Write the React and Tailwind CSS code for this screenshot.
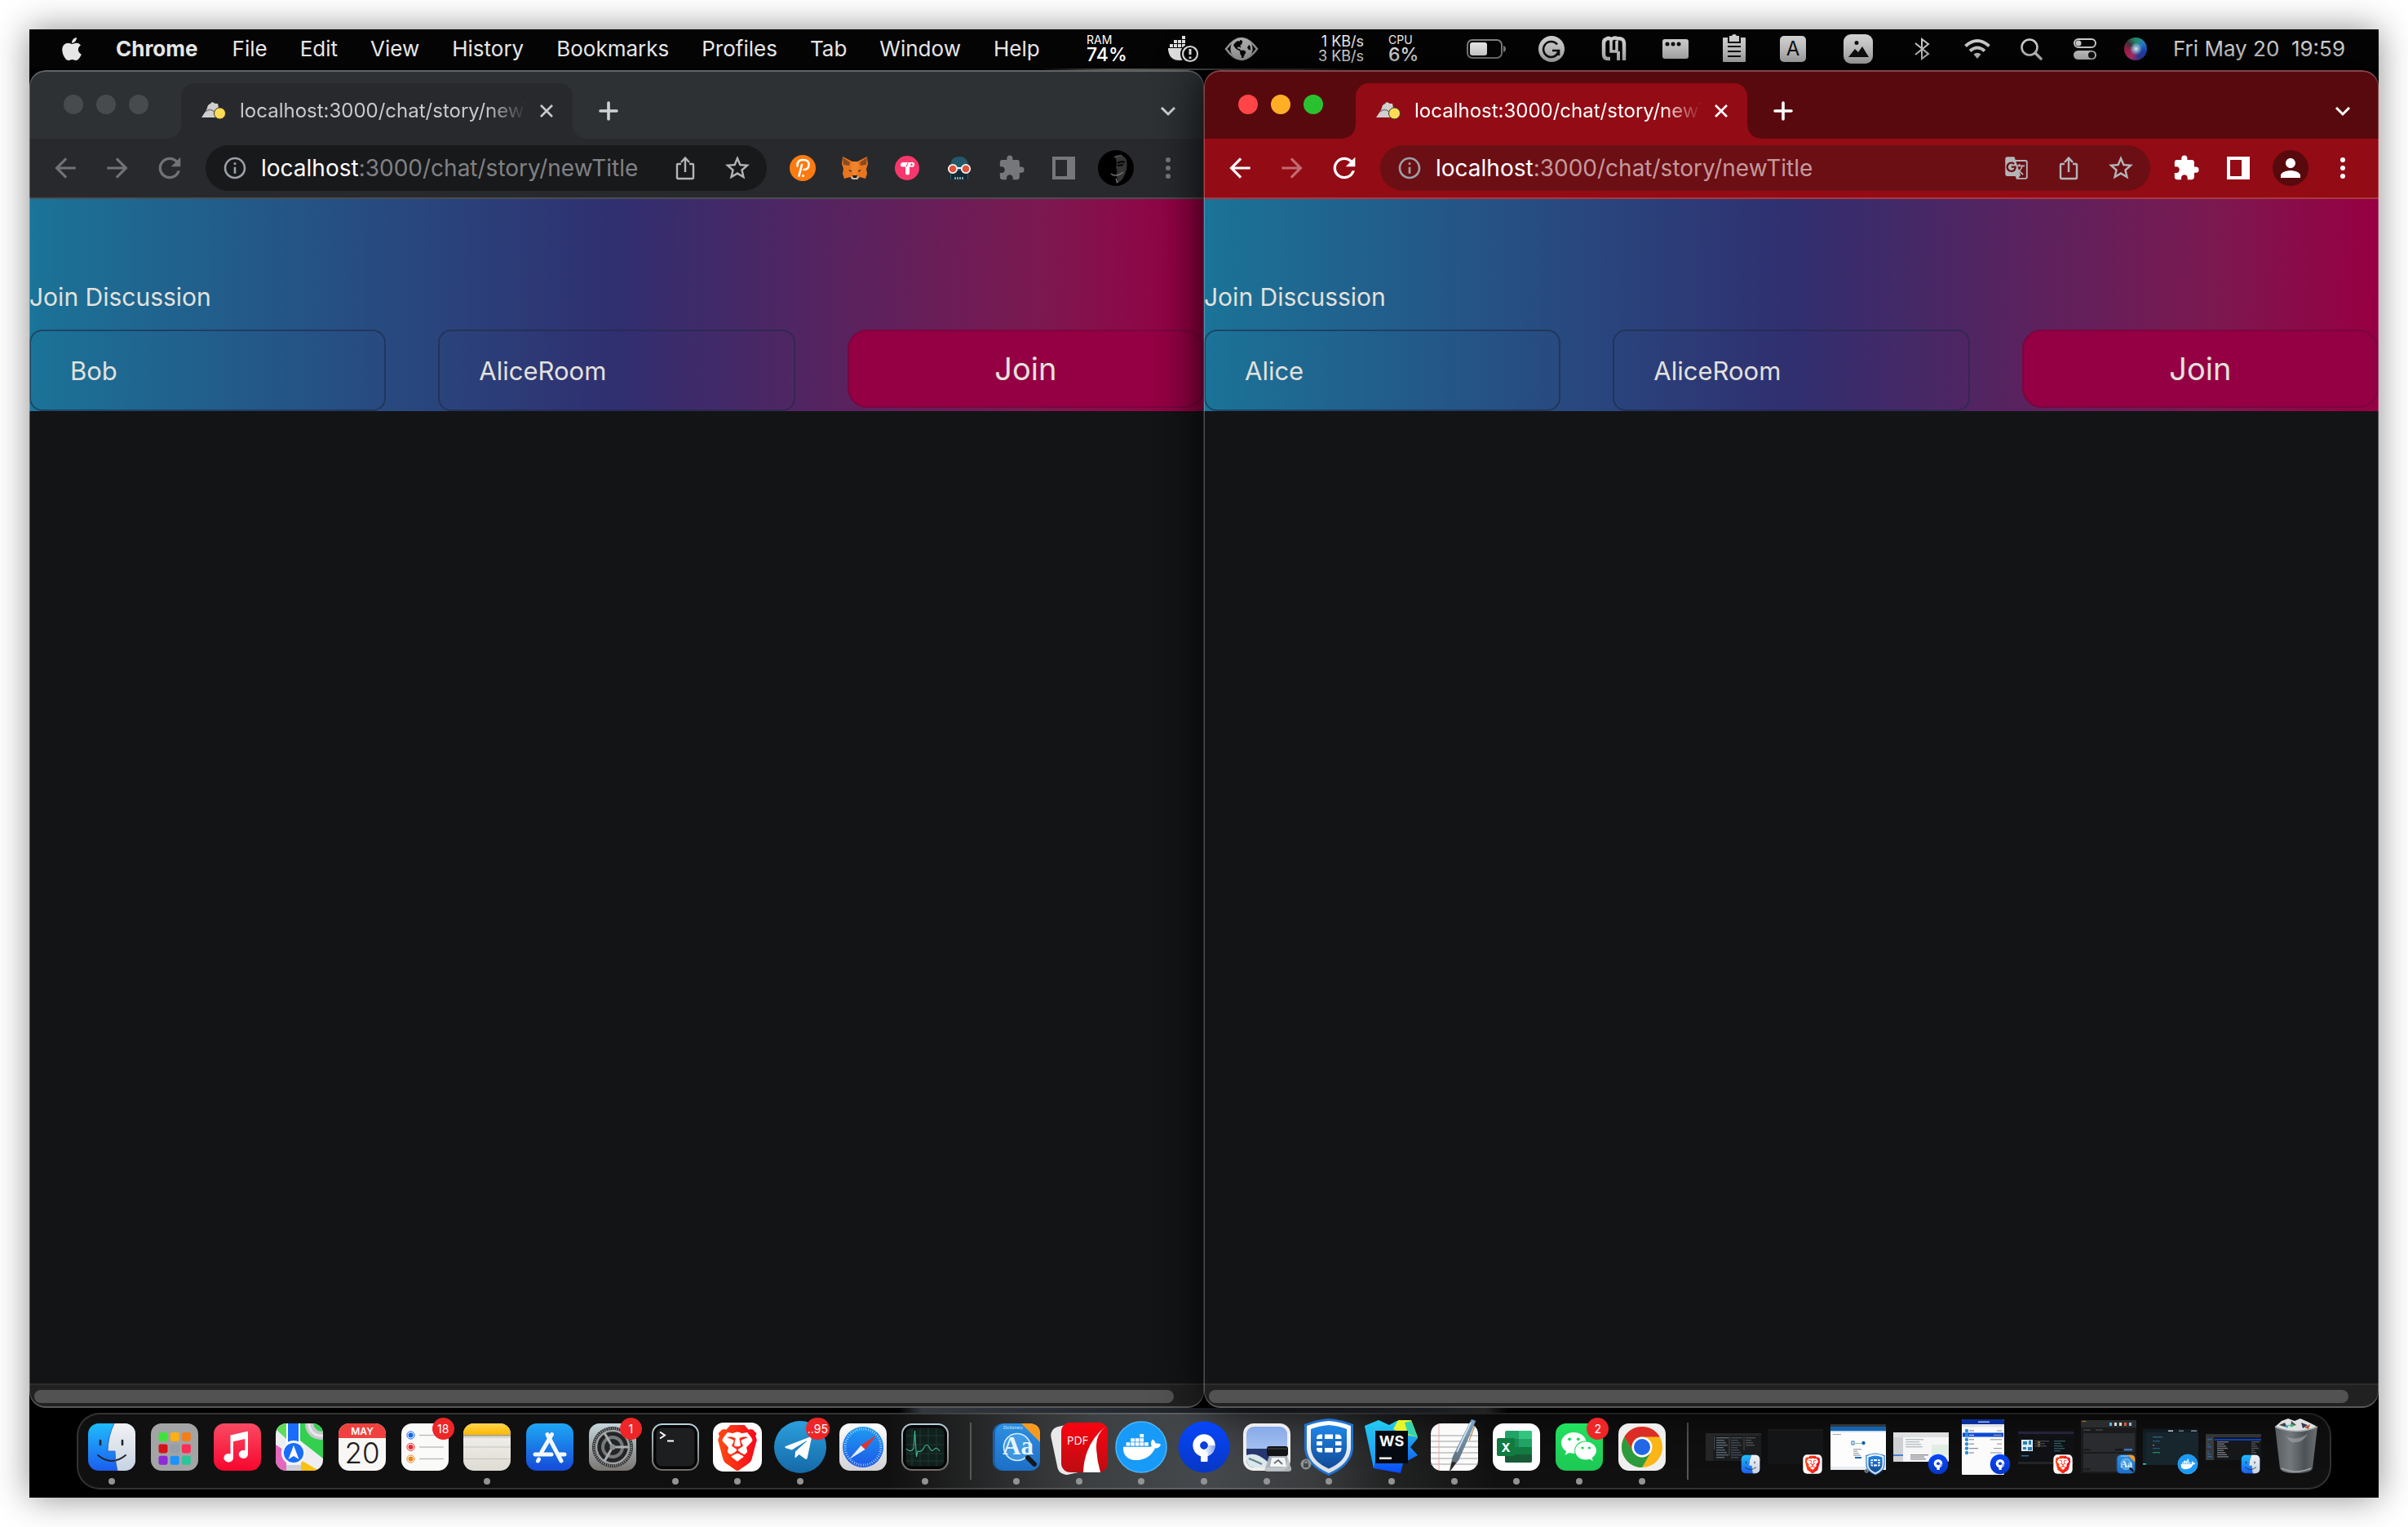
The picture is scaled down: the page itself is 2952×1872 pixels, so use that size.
import React from "react";
import { FaApple, FaDocker, FaTelegramPlane, FaWeixin, FaGlobeAmericas } from "react-icons/fa";
import { MdExtension, MdGTranslate, MdPerson, MdStarOutline, MdRefresh, MdArrowBack, MdArrowForward, MdInfoOutline } from "react-icons/md";
import { SiBrave } from "react-icons/si";

const SANS = "Inter, 'Noto Sans', sans-serif";

/* ---------- Dock artwork: every icon is drawn on a 72 x 72 grid ---------- */

function Grad({ id, from, to, horizontal }) {
  return (
    <linearGradient id={id} x1="0" y1="0" x2={horizontal ? "1" : "0"} y2={horizontal ? "0" : "1"}>
      <stop offset="0" stopColor={from} />
      <stop offset="1" stopColor={to} />
    </linearGradient>
  );
}

function Art({ size = 72, x, y, children, label }) {
  return (
    <svg x={x} y={y} width={size} height={size} viewBox="0 0 72 72" aria-label={label}>
      {children}
    </svg>
  );
}

function Tile({ fill }) {
  return <rect x="7" y="7" width="58" height="58" rx="13" fill={fill} />;
}

function Finder(p) {
  return (
    <Art {...p}>
      <defs>
        <Grad id="finderL" from="#1fbcfc" to="#1b5df0" />
        <Grad id="finderR" from="#f2f2f4" to="#c6d3e2" />
      </defs>
      <Tile fill="url(#finderL)" />
      <path d="M39 7H52A13 13 0 0 1 65 20V52A13 13 0 0 1 52 65H43Q40 53 40 41H31Q32 22 39 7Z" fill="url(#finderR)" />
      <path d="M22 28V33M49 28V33" stroke="#20262e" strokeWidth="2.6" strokeLinecap="round" />
      <path d="M19 46Q36 60 53 46" stroke="#20262e" strokeWidth="2" fill="none" strokeLinecap="round" />
      <path d="M39 7Q31 24 31 41H40Q40 54 43 65" stroke="#2a5fae" strokeWidth=".8" fill="none" />
    </Art>
  );
}

function Launchpad(p) {
  const c = ["#3fe23a", "#fbb013", "#f1801c", "#d8121b", "#93a0a6", "#fb2f55", "#8d2bd6", "#1d92fb", "#2fc39a"];
  return (
    <Art {...p}>
      <Tile fill="#a3a4a5" />
      {c.map((f, i) => (
        <rect key={f} x={16.5 + (i % 3) * 14.2} y={18 + Math.floor(i / 3) * 14.4} width="11" height="11" rx="2.4" fill={f} />
      ))}
    </Art>
  );
}

function Music(p) {
  return (
    <Art {...p}>
      <defs><Grad id="music" from="#fb4a63" to="#f7062e" /></defs>
      <Tile fill="url(#music)" />
      <path d="M27.5 21.5 49 16.500V45a5.6 5 0 1 1-3.6-4.8V26L31 29.300V49.5a5.8 5.2 0 1 1-3.5-5Z" fill="#fff" />
    </Art>
  );
}

function Maps(p) {
  return (
    <Art {...p}>
      <clipPath id="mapsClip"><rect x="7" y="7" width="58" height="58" rx="13" /></clipPath>
      <g clipPath="url(#mapsClip)">
        <rect x="7" y="7" width="58" height="58" fill="#eeeef2" />
        <path d="M7 7H20V26L7 14Z" fill="#5fdc5c" />
        <path d="M37 7H65V50L37 28Z" fill="#33cf4f" />
        <circle cx="62" cy="8" r="19" fill="#c9c9cd" />
        <circle cx="62" cy="8" r="14" fill="none" stroke="#e8e8ea" strokeWidth="3" />
        <circle cx="64" cy="6" r="11" fill="#33cf4f" />
        <path d="M7 33 20 42V65H7Z" fill="#e567bd" />
        <path d="M38 52 60 65H38Z" fill="#fcc012" />
        <rect x="22" y="7" width="13" height="32" fill="#1a6cfb" />
        <rect x="20" y="7" width="2" height="32" fill="#fff" />
        <rect x="35" y="7" width="2" height="32" fill="#fff" />
        <rect x="20" y="58" width="18" height="8" fill="#cfcfd6" />
      </g>
      <circle cx="29" cy="43" r="13.6" fill="#1a6cfb" stroke="#f2f4f8" strokeWidth="3" />
      <path d="M29 34 35.5 51 29 47 22.5 51Z" fill="#fff" />
    </Art>
  );
}

function Calendar(p) {
  return (
    <Art {...p}>
      <Tile fill="#f8f7f5" />
      <path d="M7 25V20A13 13 0 0 1 20 7H52A13 13 0 0 1 65 20V25Z" fill="#ef4140" />
      <text x="36" y="21" textAnchor="middle" fontFamily={SANS} fontSize="12" fontWeight="600" fill="#fff">MAY</text>
      <text x="36" y="56" textAnchor="middle" fontFamily={SANS} fontSize="35" fontWeight="300" fill="#1d1d1f">20</text>
    </Art>
  );
}

function Reminders(p) {
  return (
    <Art {...p}>
      <Tile fill="#fafaf9" />
      {["#1064f2", "#ea2c2c", "#f08418"].map((c, i) => (
        <g key={c}>
          <circle cx="18.500" cy={21.5 + i * 14.5} r="4.600" fill="none" stroke={c} strokeWidth="1" />
          <circle cx="18.500" cy={21.5 + i * 14.5} r="3" fill={c} />
          <path d={`M29 ${21.5 + i * 14.5}H59`} stroke="#b4b4b8" strokeWidth="1.200" />
        </g>
      ))}
    </Art>
  );
}

function Notes(p) {
  return (
    <Art {...p}>
      <defs>
        <Grad id="notesPaper" from="#f6f5f1" to="#dedbd3" />
        <Grad id="notesTop" from="#ffd550" to="#fcb800" />
      </defs>
      <Tile fill="url(#notesPaper)" />
      <path d="M7 21V20A13 13 0 0 1 20 7H52A13 13 0 0 1 65 20V21Z" fill="url(#notesTop)" />
      <path d="M7 22H65" stroke="#a9a8a3" strokeWidth="2" />
      <path d="M7 24.500H65" stroke="#a9a8a3" strokeWidth="1" strokeDasharray="1 1" />
      <path d="M7 36H65M7 50.500H65" stroke="#c6c4be" strokeWidth="1" />
    </Art>
  );
}

function AppStore(p) {
  return (
    <Art {...p}>
      <defs><Grad id="store" from="#1ea8f4" to="#1549d8" /></defs>
      <Tile fill="url(#store)" />
      <g stroke="#f3f8ff" strokeWidth="5" strokeLinecap="round">
        <path d="M38.500 20.500 26 42" />
        <path d="M33 20.500 50 53" />
        <path d="M18 45H38M47 45H54" />
        <path d="M22.500 51 21.500 53" />
      </g>
    </Art>
  );
}

function Settings(p) {
  return (
    <Art {...p}>
      <defs><Grad id="settings" from="#c5d5de" to="#7b7672" /></defs>
      <Tile fill="url(#settings)" />
      <circle cx="36" cy="36" r="25" fill="#232425" />
      <circle cx="36" cy="36" r="23" fill="none" stroke="#85898b" strokeWidth="3" strokeDasharray="1.400 1.200" />
      <circle cx="36" cy="36" r="20" fill="none" stroke="#9da1a3" strokeWidth="2.600" />
      <circle cx="36" cy="36" r="12" fill="none" stroke="#76797b" strokeWidth="4" />
      <path d="M36 36H56M36 36 26 18.700M36 36 26 53.300" stroke="#aaaeb0" strokeWidth="3" />
      <circle cx="36" cy="36" r="3.500" fill="#8a8d8f" />
    </Art>
  );
}

function Bezel() {
  return (
    <g>
      <defs><Grad id="bezel" from="#b9d4de" to="#6f6b68" /></defs>
      <Tile fill="url(#bezel)" />
      <rect x="9" y="9" width="54" height="54" rx="11" fill="#050505" />
      <rect x="12.500" y="12.500" width="47" height="47" rx="7" fill="#1d1e1f" />
    </g>
  );
}

function Terminal(p) {
  return (
    <Art {...p}>
      <Bezel />
      <path d="M17 17.500 23 21.500 17 25.500M26 28.500H34" fill="none" stroke="#fff" strokeWidth="2" />
    </Art>
  );
}

function Activity(p) {
  return (
    <Art {...p}>
      <Bezel />
      <rect x="13" y="13" width="46" height="46" rx="6" fill="#10201c" />
      <path d="M20 13V59M30 13V59M40 13V59M50 13V59M13 22H59M13 33H59M13 44H59M13 53H59" stroke="#1c3a31" strokeWidth="1" />
      <path d="M13 38Q16 42 20 40L22 38 23.500 16 25.500 48 27 41Q32 43 35 36 38 31 41 36 44 43 47 39T54 41" fill="none" stroke="#45b892" strokeWidth="1.100" />
    </Art>
  );
}

function Brave(p) {
  return (
    <Art {...p}>
      <defs><Grad id="brave" from="#fd4b12" to="#f8061c" horizontal /></defs>
      <rect x="6" y="6" width="60" height="60" rx="13" fill="#fff" />
      <SiBrave x="8" y="9" size="56" fill="url(#brave)" />
    </Art>
  );
}

function Telegram(p) {
  return (
    <Art {...p}>
      <defs><Grad id="tg" from="#2b9fdc" to="#1669a8" /></defs>
      <circle cx="36" cy="36" r="32" fill="url(#tg)" />
      <FaTelegramPlane x="15" y="19" size="37" fill="#fff" />
    </Art>
  );
}

function Safari(p) {
  return (
    <Art {...p}>
      <defs>
        <Grad id="safariBg" from="#fdfdfd" to="#d3d3d5" />
        <Grad id="safariDial" from="#1e9cf2" to="#1c58e6" />
      </defs>
      <Tile fill="url(#safariBg)" />
      <circle cx="36" cy="36" r="25" fill="url(#safariDial)" />
      <circle cx="36" cy="36" r="22" fill="none" stroke="#b9dcfa" strokeWidth="3" strokeDasharray=".8 2" />
      <path d="M53 21 38.500 39 33.500 34Z" fill="#e8302c" />
      <path d="M19 51 33.500 34 38.500 39Z" fill="#e9edf1" />
    </Art>
  );
}

function Dictionary(p) {
  return (
    <Art {...p}>
      <defs><Grad id="dict" from="#2d8fe0" to="#1d6fc8" /></defs>
      <rect x="7" y="7" width="56" height="58" rx="12" fill="#1a5fae" />
      <rect x="10" y="7" width="55" height="58" rx="12" fill="url(#dict)" />
      <path d="M42 7H53Q65 8 65 19V30Z" fill="#f89a20" />
      <text x="32" y="14" textAnchor="middle" fontFamily={SANS} fontSize="5" fill="#dceeff">Dictionary</text>
      <circle cx="37" cy="36" r="16.500" fill="#5ab4f2" opacity=".5" />
      <circle cx="37" cy="36" r="16.500" fill="none" stroke="#d7ecfc" strokeWidth="1.600" />
      <text x="38" y="45" textAnchor="middle" fontFamily="'Liberation Serif', serif" fontSize="31" fontWeight="700" fill="#e8f4fd">Aa</text>
      <path d="M50 49 58 57" stroke="#16181b" strokeWidth="6" strokeLinecap="round" />
    </Art>
  );
}

function Pdf(p) {
  return (
    <Art {...p}>
      <defs><Grad id="pdf" from="#f90410" to="#bd0c12" /></defs>
      <rect x="5" y="8" width="44" height="60" rx="11" fill="#e9e9e9" transform="rotate(-12 27 38)" />
      <rect x="14" y="6" width="57" height="61" rx="11" fill="url(#pdf)" />
      <path d="M69 10Q57 20 57 34 57 50 62 67H41Q42 32 69 10Z" fill="#fff" />
      <text x="21" y="33" fontFamily="'Open Sans', sans-serif" fontSize="14" fill="#fff">PDF</text>
    </Art>
  );
}

function Docker(p) {
  return (
    <Art {...p}>
      <circle cx="36" cy="36" r="31" fill="#189af8" stroke="#4cb6fb" strokeWidth="1.500" />
      <FaDocker x="14" y="13" size="46" fill="#fff" />
    </Art>
  );
}

function Sourcetree(p) {
  return (
    <Art {...p}>
      <defs>
        <Grad id="stree" from="#0646fb" to="#0737c4" />
        <Grad id="streeP" from="#fff" to="#7f9cf0" horizontal />
      </defs>
      <circle cx="36" cy="36" r="31.500" fill="url(#stree)" />
      <circle cx="36" cy="34" r="9.200" fill="none" stroke="#fff" strokeWidth="9" />
      <path d="M36 47.600A13.700 13.700 0 0 0 49.700 34H41A5 5 0 0 1 38 39Z" fill="url(#streeP)" />
      <rect x="32" y="42" width="8.500" height="12" rx="1" fill="#fff" />
      <circle cx="36" cy="34" r="4.700" fill="#0a3fe0" />
    </Art>
  );
}

function Preview(p) {
  return (
    <Art {...p}>
      <defs><Grad id="sky" from="#86aaea" to="#bcd0f3" /></defs>
      <Tile fill="#efeded" />
      <rect x="11" y="11" width="50" height="50" rx="9" fill="url(#sky)" />
      <path d="M11 38H61V52A9 9 0 0 1 52 61H20A9 9 0 0 1 11 52Z" fill="#26376f" />
      <path d="M11 46Q20 43 27 47T38 55L35 61H20A9 9 0 0 1 11 52Z" fill="#dbe8ec" />
      <path d="M14 50Q22 53 30 57" stroke="#63808c" strokeWidth="2" fill="none" />
      <path d="M40 44H60L66 62Q67 66 62 66H37Q32 66 34 61Z" fill="#b9bfc3" opacity=".9" />
      <path d="M42 49H58L60 60H40Z" fill="#f3f5f6" />
      <path d="M45 56 50 52 55 57" stroke="#6b7378" strokeWidth="2" fill="none" />
      <rect x="36" y="35" width="26" height="12" rx="3" fill="#131415" />
      <path d="M37 38H61" stroke="#4a4c4e" strokeWidth="1" />
    </Art>
  );
}

function Shield(p) {
  return (
    <Art {...p}>
      <defs>
        <Grad id="shield" from="#1f86e8" to="#124a96" />
        <Grad id="shieldRim" from="#ffffff" to="#d8dde2" />
      </defs>
      <path d="M36 1Q50 2 66 8V36Q66 58 36 71 6 58 6 36V8Q22 2 36 1Z" fill="#1f73d4" />
      <path d="M36 4Q50 5 63 10V36Q63 56 36 68 9 56 9 36V10Q22 5 36 4Z" fill="url(#shieldRim)" />
      <path d="M36 9Q48 10 58 14V36Q58 53 36 62.500 14 53 14 36V14Q24 10 36 9Z" fill="url(#shield)" />
      <g fill="#fff">
        <path d="M21 25Q21 20.500 26 20.500H28V26H21Z" /><rect x="31" y="20.500" width="10" height="5.500" /><path d="M44 20.500H47Q51.500 20.500 51.500 25V26H44Z" />
        <rect x="21" y="29" width="7" height="5" /><rect x="44" y="29" width="7.500" height="5" />
        <path d="M21 37H28V42.500H26Q21 42.500 21 38Z" /><rect x="31" y="37" width="10" height="5.500" /><path d="M44 37H51.500V38Q51.500 42.500 47 42.500H44Z" />
      </g>
      <circle cx="8" cy="57" r="6.500" fill="#8e9295" />
      <rect x="5" y="56" width="6" height="5" fill="#45484b" />
      <path d="M6 56V54.500a2 2 0 0 1 4 0V56" fill="none" stroke="#45484b" strokeWidth="1" />
    </Art>
  );
}

function WebStorm(p) {
  return (
    <Art {...p}>
      <defs><Grad id="ws" from="#22d3ee" to="#0b49fb" /></defs>
      <path d="M3 10 20 3 33 9 42 4 60 4 68 25 59 36 68 46 50 56 47 68 14 62Z" fill="url(#ws)" />
      <path d="M44 3H60L68 24 50 20 38 14Z" fill="#e6f62c" />
      <path d="M52 6 60 4 68 24 56 20Z" fill="#35d4b0" />
      <path d="M3 10 20 3 24 20 14 62Z" fill="#26c3f5" opacity=".6" />
      <rect x="16" y="16" width="40" height="40" fill="#050a12" />
      <text x="36" y="35" textAnchor="middle" fontFamily={SANS} fontSize="18" fontWeight="700" fill="#fff">WS</text>
      <rect x="21" y="48.500" width="15" height="2.500" fill="#fff" />
    </Art>
  );
}

function TextEdit(p) {
  return (
    <Art {...p}>
      <defs><Grad id="pen" from="#7fa8cc" to="#59616a" /></defs>
      <Tile fill="#fbfbfa" />
      <path d="M7 22H65M7 29H65M7 36H65M7 43H65M7 50H65M7 57H65" stroke="#9a9da0" strokeWidth="1" />
      <path d="M17 7V65" stroke="#f4a8a5" strokeWidth="1" />
      <path d="M57 2 62 4 41 52 30 66 34 48Z" fill="url(#pen)" stroke="#5a6d80" strokeWidth=".6" />
      <path d="M56 6 39 42" stroke="#cfe2f2" strokeWidth="1.800" />
      <path d="M61 10 54 28" stroke="#c08d4f" strokeWidth="1.200" />
      <path d="M30 66 33 54 38 55Z" fill="#2b2523" />
    </Art>
  );
}

function Excel(p) {
  return (
    <Art {...p}>
      <Tile fill="#fff" />
      <rect x="22" y="16" width="33" height="39" rx="2" fill="#21a366" />
      <path d="M39 16H53Q55 16 55 18V26H39Z" fill="#33c481" />
      <path d="M22 26H39V36H22Z" fill="#1b8a52" />
      <path d="M22 36H55V45H22Z" fill="#107c41" />
      <path d="M22 45H55V53Q55 55 53 55H24Q22 55 22 53Z" fill="#185c37" />
      <rect x="12" y="25" width="22" height="22" rx="2" fill="#107c41" />
      <text x="23" y="41.500" textAnchor="middle" fontFamily={SANS} fontSize="15" fontWeight="700" fill="#fff">X</text>
    </Art>
  );
}

function WeChat(p) {
  return (
    <Art {...p}>
      <defs><Grad id="wechat" from="#22e25f" to="#1cc854" /></defs>
      <Tile fill="url(#wechat)" />
      <FaWeixin x="13" y="13" size="45" fill="#fff" />
    </Art>
  );
}

function ChromeIcon(p) {
  return (
    <Art {...p}>
      <Tile fill="#efefef" />
      <circle cx="36" cy="36" r="25" fill="#fbb516" />
      <path d="M14.350 23.500A25 25 0 0 1 57.650 23.500H36A12.500 12.500 0 0 0 25.200 42.200Z" fill="#dc2c26" />
      <path d="M14.350 23.500A25 25 0 0 0 36 61L46.800 42.250A12.500 12.500 0 0 1 25.200 42.250Z" fill="#2c9a3f" />
      <circle cx="36" cy="36" r="12.500" fill="#fff" />
      <circle cx="36" cy="36" r="10" fill="#2167e8" />
    </Art>
  );
}

function Trash(p) {
  return (
    <Art {...p}>
      <defs>
        <linearGradient id="trash" x1="0" x2="1">
          <stop offset="0" stopColor="#585d61" /><stop offset=".35" stopColor="#74797d" />
          <stop offset=".7" stopColor="#4d5256" /><stop offset="1" stopColor="#6a6f73" />
        </linearGradient>
      </defs>
      <path d="M10 11 18 4 26 1 34 4 41 1 50 5 60 10 58 17H14Z" fill="#dfe1e2" />
      <path d="M15 9 22 6 25 12Z" fill="#3f4447" /><path d="M30 4 36 9 29 11Z" fill="#4d5255" />
      <path d="M42 6 50 9 44 13Z" fill="#3b3550" /><path d="M26 9 33 8 31 12Z" fill="#4cc16d" />
      <path d="M46 12 53 8 51 14Z" fill="#b5552e" /><path d="M22 10 27 9 25 13Z" fill="#38a6c9" />
      <path d="M10 11Q36 22 62 11L56 62Q54 68 36 68T16 62Z" fill="url(#trash)" />
      <path d="M10 11Q36 22 62 11" fill="none" stroke="#a9aeb1" strokeWidth="1.400" />
      <path d="M18 62Q36 70 54 62" fill="none" stroke="#a0a5a8" strokeWidth="1.400" />
      <path d="M22 22Q34 30 50 20 44 32 30 30Z" fill="#a3a8ab" opacity=".6" />
    </Art>
  );
}

/* ---------- Minimised windows ---------- */

function Rows({ x, y, n, step, w, fill }) {
  return Array.from({ length: n }, (_, i) => (
    <rect key={i} x={x} y={y + i * step} width={w - ((i * 5) % 7)} height="1.400" fill={fill} />
  ));
}

function FilesThumb() {
  return (
    <Art label="Files">
      <rect x="2" y="19" width="68" height="34" rx="1" fill="#1b1c1d" />
      <rect x="2" y="19" width="68" height="3" fill="#262728" />
      <rect x="2" y="22" width="9" height="31" fill="#242526" />
      <Rows x={15} y={24} n={9} step={3} w={15} fill="#59666f" />
      <Rows x={33} y={24} n={9} step={3} w={14} fill="#3f4a55" />
      <Rows x={51} y={24} n={4} step={3} w={12} fill="#4b4f52" />
      <path d="M12.500 23V39M31 23V46M49 23V40" stroke="#4a4b4c" />
      <Finder x="43" y="43" size="28" />
    </Art>
  );
}

function BlankThumb() {
  return (
    <Art label="Browser">
      <rect x="2" y="14" width="68" height="43" rx="1" fill="#141516" />
      <rect x="2" y="14" width="68" height="2" fill="#191a1b" />
      <Brave x="43" y="43" size="28" />
    </Art>
  );
}

function VpnThumb() {
  return (
    <Art label="VPN">
      <rect x="2" y="8" width="68" height="56" rx="1" fill="#fdfdfe" />
      <rect x="2" y="8" width="68" height="3" fill="#33363a" />
      <rect x="2" y="11" width="68" height="5" fill="#1463ad" />
      <rect x="2" y="16" width="68" height="1.500" fill="#bcd5ec" />
      <rect x="2" y="60" width="68" height="4" fill="#e9edf5" />
      <rect x="5" y="20" width="10" height="1" fill="#9aa" />
      <rect x="28" y="29" width="3" height="4" fill="none" stroke="#2a74b4" />
      <path d="M32 31.500H40" stroke="#8fc9a0" />
      <circle cx="42.500" cy="31" r="2.200" fill="#195f9f" />
      <Rows x={30} y={38} n={4} step={2.5} w={10} fill="#a9adb3" />
      <rect x="32" y="48" width="8" height="2" fill="#1668b5" />
      <Shield x="43" y="43" size="28" />
    </Art>
  );
}

function RepoThumb() {
  return (
    <Art label="Repository">
      <rect x="2" y="18" width="68" height="36" rx="1" fill="#f6f6f7" />
      <rect x="2" y="18" width="68" height="6" fill="#dfdfe1" />
      <rect x="2" y="24" width="12" height="30" fill="#cfd0d3" />
      <rect x="2" y="45" width="12" height="2" fill="#4b7fd8" />
      <rect x="49" y="33" width="21" height="13" fill="#e2eee3" />
      <Rows x={17} y={26} n={4} step={3} w={22} fill="#b6bfc4" />
      <Rows x={23} y={45} n={3} step={2.5} w={22} fill="#8a8d92" />
      <Sourcetree x="43" y="43" size="28" />
    </Art>
  );
}

function ReposThumb() {
  return (
    <Art label="Repositories">
      <rect x="10" y="2" width="52" height="68" rx="1.500" fill="#fbfbfc" />
      <path d="M10 8V3.500Q10 2 11.500 2H60.500Q62 2 62 3.500V8Z" fill="#0a2f9c" />
      <rect x="30" y="4.500" width="14" height="1.500" fill="#aabbec" />
      <rect x="10" y="8" width="52" height="3.500" fill="#e3e4e8" />
      <rect x="11" y="18.500" width="50" height="5" fill="#0b49d6" />
      {[0, 1, 2, 3, 4, 5].map((i) => (
        <g key={i}>
          <circle cx="16" cy={16 + i * 5.400} r="2.200" fill="#2d8fd0" />
          <rect x="19" y={15.400 + i * 5.400} width={i === 4 ? 11 : 6} height="1.200" fill={i === 1 ? "#c5d5f8" : "#8b8f96"} />
          <rect x={53 - (i % 3) * 4} y={15.400 + i * 5.400} width={6 + (i % 3) * 4} height="1.200" fill="#9ea1a6" />
        </g>
      ))}
      <Sourcetree x="43" y="43" size="28" />
    </Art>
  );
}

function ExplorerThumb() {
  return (
    <Art label="Explorer">
      <rect x="2" y="16" width="68" height="41" fill="#0f1114" />
      <rect x="2" y="17" width="68" height="3" fill="#23243a" />
      <rect x="2" y="54" width="68" height="3" fill="#222428" />
      <rect x="6" y="27" width="14" height="14" fill="#d9ecf7" />
      <path d="M8 29H13V33H8ZM15 28H18V33H15ZM8 36H12V39H8ZM14 36H19V40H14Z" fill="#2b7fb4" />
      <rect x="26" y="28" width="3" height="8" fill="#9a6b2e" />
      <Rows x={22} y={28} n={3} step={3} w={18} fill="#3e4248" />
      <Rows x={46} y={28} n={5} step={3} w={14} fill="#2f5560" />
      <rect x="6" y="46" width="9" height="1.500" fill="#2f6ca6" />
      <Brave x="43" y="43" size="28" />
    </Art>
  );
}

function TranslateThumb() {
  return (
    <Art label="Translator">
      <rect x="2" y="3" width="68" height="65" fill="#1a1b1c" />
      <rect x="2" y="3" width="68" height="9" fill="#2b2c2e" />
      <circle cx="4" cy="4.500" r=".8" fill="#e0443e" /><circle cx="6" cy="4.500" r=".8" fill="#dea123" /><circle cx="8" cy="4.500" r=".8" fill="#1aab29" />
      {["#56b7e8", "#d8dadc", "#e3dcc6", "#d9593b", "#8ebfe0"].map((c, i) => (
        <rect key={c} x={37 + i * 6} y="6" width="3" height="4" fill={c} />
      ))}
      <rect x="5" y="14" width="9" height="2" fill="#38393b" /><rect x="20" y="14" width="9" height="2" fill="#38393b" />
      <rect x="5" y="19" width="63" height="23" rx="1" fill="#2a2b2e" />
      <rect x="5" y="44" width="63" height="22" rx="1" fill="#2a2b2e" />
      <rect x="55" y="38" width="10" height="2.500" fill="#3b73c4" />
      <rect x="44" y="38" width="9" height="2.500" fill="#151617" />
      <rect x="6" y="38" width="8" height="2.500" fill="#1b1c1d" /><rect x="6" y="62" width="8" height="2.500" fill="#1b1c1d" />
      <Dictionary x="43" y="43" size="28" />
    </Art>
  );
}

function ContainerThumb() {
  return (
    <Art label="Containers">
      <rect x="2" y="14" width="68" height="44" rx="1" fill="#17252d" />
      <rect x="2" y="14" width="68" height="4" fill="#111b22" />
      <rect x="2" y="18" width="4" height="40" fill="#122029" />
      <rect x="33" y="15.500" width="6" height="1.400" fill="#d8dde0" />
      <rect x="46" y="15.500" width="6" height="1.400" fill="#748088" /><rect x="61" y="15.500" width="7" height="1.400" fill="#8b979f" />
      <rect x="14" y="23" width="12" height="1.400" fill="#2b6079" /><rect x="14" y="28" width="9" height="1.400" fill="#27546c" />
      <rect x="14" y="33" width="2" height="1.400" fill="#b9683d" /><rect x="14" y="37" width="9" height="1.400" fill="#2b4f62" />
      <rect x="14" y="42" width="9" height="1.400" fill="#25855f" /><rect x="2" y="56" width="4" height="1.500" fill="#4cc9a9" />
      <Docker x="43" y="43" size="28" />
    </Art>
  );
}

function ListThumb() {
  return (
    <Art label="File list">
      <rect x="2" y="20" width="68" height="32" rx="1" fill="#161718" />
      <rect x="2" y="20" width="68" height="4" fill="#333436" />
      <rect x="2" y="24" width="10" height="28" fill="#3a3b3d" />
      <rect x="13" y="26" width="57" height="2" fill="#0d3ec0" />
      <Rows x={16} y={29} n={8} step={2.6} w={14} fill="#70757b" />
      <Rows x={58} y={29} n={6} step={2.6} w={10} fill="#50545a" />
      <Rows x={4} y={26} n={8} step={3} w={6} fill="#2a64a8" />
      <Finder x="43" y="43" size="28" />
    </Art>
  );
}

const APPS = [
  { name: "Finder", Icon: Finder, open: true },
  { name: "Launchpad", Icon: Launchpad },
  { name: "Music", Icon: Music },
  { name: "Maps", Icon: Maps },
  { name: "Calendar", Icon: Calendar },
  { name: "Reminders", Icon: Reminders, badge: "18" },
  { name: "Notes", Icon: Notes, open: true },
  { name: "App Store", Icon: AppStore },
  { name: "System Preferences", Icon: Settings, badge: "1" },
  { name: "Terminal", Icon: Terminal, open: true },
  { name: "Brave", Icon: Brave, open: true },
  { name: "Telegram", Icon: Telegram, open: true, badge: "..95" },
  { name: "Safari", Icon: Safari },
  { name: "Activity Monitor", Icon: Activity, open: true },
];

const MORE_APPS = [
  { name: "Dictionary", Icon: Dictionary, open: true },
  { name: "PDF Reader", Icon: Pdf, open: true },
  { name: "Docker", Icon: Docker, open: true },
  { name: "Sourcetree", Icon: Sourcetree, open: true },
  { name: "Preview", Icon: Preview, open: true },
  { name: "FortiClient", Icon: Shield, open: true },
  { name: "WebStorm", Icon: WebStorm, open: true },
  { name: "TextEdit", Icon: TextEdit, open: true },
  { name: "Excel", Icon: Excel, open: true },
  { name: "WeChat", Icon: WeChat, open: true, badge: "2" },
  { name: "Chrome", Icon: ChromeIcon, open: true },
];

const MINIMISED = [
  { name: "Files window", Icon: FilesThumb },
  { name: "Browser window", Icon: BlankThumb },
  { name: "VPN window", Icon: VpnThumb },
  { name: "Repository window", Icon: RepoThumb },
  { name: "Repositories window", Icon: ReposThumb },
  { name: "Explorer window", Icon: ExplorerThumb },
  { name: "Translator window", Icon: TranslateThumb },
  { name: "Containers window", Icon: ContainerThumb },
  { name: "File list window", Icon: ListThumb },
  { name: "Trash", Icon: Trash },
];

function DockItem({ name, Icon, open, badge }) {
  return (
    <button type="button" aria-label={name} className="flex min-w-0 flex-1 flex-col items-center gap-0.5">
      <span className="relative block size-[72px]">
        <Icon />
        {badge && (
          <span className="absolute top-0 right-0 flex h-[27px] min-w-[27px] items-center justify-center rounded-full bg-[#ee2628] px-0.5 text-[14px] leading-none text-white">
            {badge}
          </span>
        )}
      </span>
      {open && <span className="size-2 rounded-full bg-[#929394]" />}
    </button>
  );
}

function DockDivider() {
  return (
    <div className="flex w-[35px] shrink-0 justify-center pt-1.5">
      <div className="h-[70px] w-0.5 bg-[#555657]" />
    </div>
  );
}

function Dock() {
  return (
    <nav
      aria-label="Dock"
      className="mx-[58px] mb-2.5 flex h-[94px] items-start rounded-[28px] border-2 border-white/15 px-[3px] pt-1 bg-[linear-gradient(to_right,#101010_36%,#2b2c2d_41%,#3d4042_45%,#45484c_50%,#393b3d_55%,#232424_58%,#101010_63%)]"
    >
      {APPS.map((a) => <DockItem key={a.name} {...a} />)}
      <DockDivider />
      {MORE_APPS.map((a) => <DockItem key={a.name} {...a} />)}
      <DockDivider />
      {MINIMISED.map((a) => <DockItem key={a.name} {...a} />)}
    </nav>
  );
}

/* ---------- Menu bar ---------- */

const MENUS = ["File", "Edit", "View", "History", "Bookmarks", "Profiles", "Tab", "Window", "Help"];

function Meter({ label, value }) {
  return (
    <span className="flex flex-col text-white">
      <span className="text-[14px] leading-[14px]">{label}</span>
      <span className="text-[23px] leading-[22px] font-medium">{value}</span>
    </span>
  );
}

function MenuBar() {
  return (
    <header className="flex h-12 shrink-0 items-center bg-[#040404] pr-9 pl-9 text-[26px] leading-none whitespace-nowrap text-[#e6e6e6]">
      <button type="button" aria-label="Apple menu"><FaApple className="size-8" /></button>
      <button type="button" className="ml-[38px] font-bold">Chrome</button>
      <nav className="ml-[42px] flex gap-10">
        {MENUS.map((m) => <button type="button" key={m}>{m}</button>)}
      </nav>
      <div className="ml-auto flex items-center">
        <div className="w-[52px]"><Meter label="RAM" value="74%" /></div>
        <svg className="ml-11" width="44" height="36" viewBox="0 0 44 36" fill="#e0e0e0">
          <path d="M4 17H34V20Q30 32 18 32 5 32 4 18Z" />
          <path d="M6 12h4v4H6zM11 12h4v4h-4zM16 12h4v4h-4zM21 12h4v4h-4zM11 7h4v4h-4zM16 7h4v4h-4zM21 7h4v4h-4zM21 2h4v4h-4z" />
          <circle cx="31" cy="24" r="12" fill="#040404" />
          <circle cx="31" cy="24" r="9" fill="none" stroke="#e0e0e0" strokeWidth="2.200" />
          <path d="M31 18V25M31 27.500V30" stroke="#e0e0e0" strokeWidth="3" />
        </svg>
        <svg className="ml-7" width="44" height="32" viewBox="0 0 44 32">
          <path d="M3 16Q22 -10 41 16 22 42 3 16Z" fill="none" stroke="#a3a3a3" strokeWidth="2.500" />
          <FaGlobeAmericas x="8" y="2" size="28" fill="#b9b9b9" />
        </svg>
        <span className="ml-[68px] w-[60px] text-right text-[18px] leading-[18px] text-white">1 KB/s<br />3 KB/s</span>
        <div className="ml-[30px] w-[38px]"><Meter label="CPU" value="6%" /></div>
        <svg className="ml-14" width="52" height="24" viewBox="0 0 52 24">
          <rect x="3" y="1" width="42" height="22" rx="6" fill="none" stroke="#8b8b8b" strokeWidth="2" />
          <rect x="6" y="4" width="21" height="16" rx="3" fill="#fff" />
          <path d="M47 8Q50 9 50 12T47 16Z" fill="#8b8b8b" />
        </svg>
        <svg className="ml-9" width="36" height="36" viewBox="0 0 36 36">
          <circle cx="18" cy="18" r="16" fill="#dcdcdc" />
          <path d="M25 12.500A9.500 9.500 0 1 0 27 20H19M27 20V26M27 20Q24 28 17.500 28" fill="none" stroke="#111" strokeWidth="2.600" />
        </svg>
        <svg className="ml-10" width="36" height="32" viewBox="0 0 36 32" fill="none" stroke="#e0e0e0">
          <path d="M14 28H11Q6 28 6 22V9Q6 4 10 4" strokeWidth="4.500" />
          <path d="M9 4Q12 1.500 15 4.500 19 1 23 3.500 31 2 31 10V30" strokeWidth="4.500" />
          <path d="M15 6V19H22V6" strokeWidth="3.500" />
          <path d="M24 19V30" strokeWidth="4" />
        </svg>
        <svg className="ml-10" width="36" height="28" viewBox="0 0 36 28">
          <rect x="2" y="2" width="32" height="24" rx="3" fill="#dcdcdc" />
          <circle cx="8" cy="8" r="2.500" fill="#111" /><circle cx="15" cy="8" r="2.500" fill="#111" /><circle cx="22" cy="8" r="2.500" fill="#111" />
        </svg>
        <svg className="ml-10" width="28" height="36" viewBox="0 0 28 36">
          <rect x="0" y="4" width="28" height="30" rx="1" fill="#dedede" />
          <path d="M7 3V10H21V3" fill="none" stroke="#111" strokeWidth="2" />
          <rect x="8" y="2" width="12" height="6" fill="#dedede" /><circle cx="14" cy="3" r="3" fill="#dedede" />
          <path d="M6 15H22M6 21H22M6 27H22" stroke="#111" strokeWidth="2" />
        </svg>
        <span className="ml-10 flex w-9 justify-center">
          <span className="flex size-8 items-center justify-center rounded-[5px] bg-[#dedede] text-[24px] leading-none text-[#111]">A</span>
        </span>
        <svg className="ml-11" width="36" height="36" viewBox="0 0 36 36">
          <rect width="36" height="36" rx="9" fill="#dedede" />
          <circle cx="16" cy="10.500" r="2.500" fill="#111" />
          <path d="M6 28 14 18 18 22 23 15 31 28Z" fill="#111" />
        </svg>
        <svg className="ml-12" width="24" height="32" viewBox="0 0 24 32" fill="none" stroke="#e0e0e0" strokeWidth="2">
          <path d="M4 9 20 22 12 28V4L20 10 4 23" />
        </svg>
        <svg className="ml-10" width="32" height="26" viewBox="0 0 32 26" fill="none" stroke="#e0e0e0" strokeWidth="4">
          <path d="M1.500 9.500Q16 -3.500 30.500 9.500" /><path d="M7 15.500Q16 7.500 25 15.500" />
          <path d="M16 25 11.500 19.500Q16 16 20.500 19.500Z" fill="#e0e0e0" stroke="none" />
        </svg>
        <svg className="ml-9" width="28" height="28" viewBox="0 0 28 28" fill="none" stroke="#e0e0e0">
          <circle cx="12" cy="12" r="9.500" strokeWidth="2.600" /><path d="M19 19 26 26" strokeWidth="3.400" strokeLinecap="round" />
        </svg>
        <svg className="ml-9" width="32" height="28" viewBox="0 0 32 28">
          <rect x="3" y="2" width="26" height="10" rx="5" fill="none" stroke="#e0e0e0" strokeWidth="2" />
          <circle cx="8" cy="7" r="3.500" fill="#e0e0e0" />
          <rect x="2" y="16" width="28" height="11" rx="5.500" fill="#e0e0e0" />
          <circle cx="24" cy="21.500" r="4" fill="#111" />
        </svg>
        <span className="ml-8 size-7 rounded-full bg-[radial-gradient(circle_at_52%_50%,#fff_4%,#9fc8f5_16%,transparent_38%),conic-gradient(#1f9e6a,#2b8fd8,#1f4fd0,#3a47b8,#d33a86,#c22457,#4a3344,#1f9e6a)]" />
        <time className="ml-8 w-[216px] whitespace-pre">Fri May 20  19:59</time>
      </div>
    </header>
  );
}

/* ---------- Browser windows ---------- */

const DARK = {
  strip: "bg-[#2d3134]",
  bar: "bg-[#28292d]",
  line: "border-[#4b4d4f]",
  omni: "bg-[#18191b]",
  path: "text-[#808184]",
  title: "text-[#c8c9cb]",
  tabIcon: "text-[#d0d1d3]",
  back: "text-[#707275]",
  forward: "text-[#707275]",
  ext: "text-[#76777a]",
  flareL: "bg-[radial-gradient(circle_at_top_left,transparent_15px,#28292d_16px)]",
  flareR: "bg-[radial-gradient(circle_at_top_right,transparent_15px,#28292d_16px)]",
  lights: ["bg-[#484b4e]", "bg-[#484b4e]", "bg-[#484b4e]"],
  shadow: "",
};

const RED = {
  strip: "bg-[#58090d]",
  bar: "bg-[#930b14]",
  line: "border-[#ac383c]",
  omni: "bg-[#6b0f14]",
  path: "text-[#c5999c]",
  title: "text-white",
  tabIcon: "text-white",
  back: "text-white",
  forward: "text-[#c26b70]",
  ext: "text-white",
  flareL: "bg-[radial-gradient(circle_at_top_left,transparent_15px,#930b14_16px)]",
  flareR: "bg-[radial-gradient(circle_at_top_right,transparent_15px,#930b14_16px)]",
  lights: ["bg-[#ff4548]", "bg-[#ffae26]", "bg-[#2ac131]"],
  shadow: "shadow-[0_0_60px_rgba(0,0,0,0.9)]",
};

function Slot({ children, label }) {
  return (
    <button type="button" aria-label={label} className="flex w-16 shrink-0 items-center justify-center">
      {children}
    </button>
  );
}

function ShareIcon() {
  return (
    <svg width="28" height="30" viewBox="0 0 28 30" fill="none" stroke="currentColor" strokeWidth="2.400">
      <path d="M9 10H5Q4 10 4 11.500V26.500Q4 28 5.500 28H22.500Q24 28 24 26.500V11.500Q24 10 23 10H19" />
      <path d="M14 20V3M9 8 14 2.500 19 8" />
    </svg>
  );
}

function PanelIcon() {
  return (
    <svg width="28" height="28" viewBox="0 0 28 28" fill="currentColor">
      <path fillRule="evenodd" d="M0 0H28V28H0ZM4 4V24H18V4Z" />
    </svg>
  );
}

function FaviconMountain() {
  return (
    <svg width="32" height="24" viewBox="0 0 32 24">
      <path d="M1 20 7 11 9 5 12 3 14 1 18 3 21 3 22 8 18 20Z" fill="#cfcfcf" />
      <path d="M6 13Q11 8 17 13" fill="none" stroke="#777" strokeWidth="1.200" />
      <circle cx="23.500" cy="15" r="7" fill="#ffdc55" stroke="#3b3324" strokeWidth="1" />
    </svg>
  );
}

function Extensions() {
  return (
    <>
      <Slot label="Picture extension">
        <svg width="32" height="32" viewBox="0 0 32 32">
          <circle cx="16" cy="16" r="16" fill="#fc7b10" />
          <path d="M9.500 13.500Q9 6 16.500 6T23.500 12Q23.500 18 17.500 18M11.500 25.500 15 12" fill="none" stroke="#fff" strokeWidth="2.600" strokeLinecap="round" />
          <circle cx="16.500" cy="25.500" r="1.600" fill="#fff" />
        </svg>
      </Slot>
      <Slot label="Wallet">
        <svg width="32" height="30" viewBox="0 0 32 30">
          <path d="M1 1 13 7H19L31 1 32 10 30 16 31 22 29 28 22 26 19 29H13L10 26 3 28 1 22 2 16 0 10Z" fill="#e8761f" />
          <path d="M1 2 10 8 9 12 2 11ZM31 2 22 8 23 12 30 11Z" fill="#8c4a22" />
          <path d="M13 7H19L21 13 18 24H14L11 13Z" fill="#f0832c" />
          <path d="M8 17 12 18 11 20ZM24 17 20 18 21 20Z" fill="#2a3140" />
          <path d="M11 26 13 25H19L21 26 19 29H13Z" fill="#c9b8a8" /><path d="M13 24H19L18 27H14Z" fill="#1c1815" />
        </svg>
      </Slot>
      <Slot label="Tools extension">
        <svg width="30" height="30" viewBox="0 0 30 30">
          <circle cx="15" cy="15" r="15" fill="#f8376d" />
          <path d="M7 11.500A3 3 0 0 1 10 8H20a3 3 0 1 1 0 5.500H18V21a2.500 2.500 0 0 1-5 0V13.500H9Q7 13.500 7 11.500Z" fill="#fff" />
          <circle cx="20.500" cy="10.800" r="1.300" fill="#f8376d" /><path d="M14 13.500 16 8.500" stroke="#f8376d" />
        </svg>
      </Slot>
      <Slot label="Privacy extension">
        <svg width="32" height="32" viewBox="0 0 32 32">
          <path d="M5 15Q5 2 16 2T27 15V30H5Z" fill="#22586a" />
          <path d="M6 19H26V30H6Z" fill="#122a35" />
          <circle cx="8" cy="17" r="5.200" fill="#e0513c" stroke="#f4f1ee" strokeWidth="1.800" />
          <circle cx="24" cy="17" r="5.200" fill="#e0513c" stroke="#f4f1ee" strokeWidth="1.800" />
          <path d="M13 16H19" stroke="#f4f1ee" strokeWidth="1.800" />
          <path d="M11 27V30M14 27V30M17 27V30M20 27V30" stroke="#a8d3df" strokeWidth="1.400" />
        </svg>
      </Slot>
    </>
  );
}

function MaskAvatar() {
  return (
    <svg width="44" height="44" viewBox="0 0 44 44">
      <circle cx="22" cy="22" r="22" fill="#000" />
      <path d="M21 8Q31 4 35 12 37 22 32 32 28 40 22 41 25 34 22 30 25 26 22 22 24 15 21 8Z" fill="#343434" />
      <path d="M24 16Q28 13 33 15M24 19 31 18" stroke="#050505" strokeWidth="2" fill="none" />
      <path d="M16 29Q22 34 31 27M22 35 24 40" stroke="#808080" strokeWidth="1.200" fill="none" />
      <path d="M20 9Q24 6 30 7" stroke="#666" strokeWidth="1.200" fill="none" />
    </svg>
  );
}

function JoinForm({ id, name }) {
  const field =
    "h-[100px] w-full min-w-0 rounded-2xl border-2 border-[#202a44]/60 bg-transparent px-12 text-[31px] text-[#e3e1dd] outline-none";
  return (
    <form
      onSubmit={(e) => e.preventDefault()}
      className="bg-[linear-gradient(91deg,#1a7499_0%,#1c6f95_3%,#302f70_50%,#7c1850_86%,#960043_99%)] pt-[102px] text-[#e3e1dd]"
    >
      <h1 className="mb-[22px] text-[30px] leading-9">Join Discussion</h1>
      <div className="grid grid-cols-3 items-start gap-16">
        <input aria-label="User name" id={`${id}-user`} defaultValue={name} className={field} />
        <input aria-label="Room" id={`${id}-room`} defaultValue="AliceRoom" className={field} />
        <button type="submit" className="h-24 rounded-3xl border-2 border-[#7b0540] bg-[#940043] text-[38px]">Join</button>
      </div>
    </form>
  );
}

function BrowserWindow({ id, theme, name, extensions, translate, avatar }) {
  return (
    <section className={`relative flex min-w-0 flex-1 flex-col overflow-hidden rounded-[20px] bg-[#131416] ${theme.shadow}`}>
      <div className={`flex h-[84px] shrink-0 items-end ${theme.strip}`}>
        <div className="flex gap-4 self-center pl-[42px]">
          <button type="button" aria-label="Close window" className={`size-6 rounded-full ${theme.lights[0]}`} />
          <button type="button" aria-label="Minimise window" className={`size-6 rounded-full ${theme.lights[1]}`} />
          <button type="button" aria-label="Zoom window" className={`size-6 rounded-full ${theme.lights[2]}`} />
        </div>
        <span className={`ml-6 size-4 ${theme.flareL}`} />
        <div className={`flex h-[68px] w-[480px] items-center rounded-t-2xl pr-4 pl-6 ${theme.bar} ${theme.title}`}>
          <FaviconMountain />
          <span className="ml-4 min-w-0 flex-1 overflow-hidden text-[24px] leading-8 whitespace-nowrap [mask-image:linear-gradient(to_right,#000_86%,transparent_100%)]">
            localhost:3000/chat/story/newTitle
          </span>
          <button type="button" aria-label="Close tab" className="ml-2 flex size-8 items-center justify-center">
            <svg width="18" height="18" viewBox="0 0 18 18" stroke="currentColor" strokeWidth="2.600"><path d="M2 2 16 16M16 2 2 16" /></svg>
          </button>
        </div>
        <span className={`size-4 ${theme.flareR}`} />
        <button type="button" aria-label="New tab" className={`ml-3 flex h-[68px] w-8 items-center justify-center ${theme.tabIcon}`}>
          <svg width="24" height="24" viewBox="0 0 24 24" stroke="currentColor" strokeWidth="3.600" strokeLinecap="round"><path d="M12 2V22M2 12H22" /></svg>
        </button>
        <button type="button" aria-label="Search tabs" className={`mr-7 ml-auto flex h-[68px] w-8 items-center justify-center ${theme.tabIcon}`}>
          <svg width="20" height="14" viewBox="0 0 20 14" fill="none" stroke="currentColor" strokeWidth="3"><path d="M2 3 10 11 18 3" /></svg>
        </button>
      </div>

      <div className={`flex h-[74px] shrink-0 border-b-2 px-3 py-2 ${theme.bar} ${theme.line}`}>
        <div className={`flex ${theme.back}`}>
          <Slot label="Back"><MdArrowBack className="size-[38px]" /></Slot>
          <span className={`flex ${theme.forward}`}><Slot label="Forward"><MdArrowForward className="size-[38px]" /></Slot></span>
          <Slot label="Reload"><MdRefresh className="size-10" /></Slot>
        </div>
        <div className={`mx-3 flex min-w-0 flex-1 items-center rounded-full pr-1 pl-5 text-[28px] text-[#b4b5b8] ${theme.omni}`}>
          <MdInfoOutline className="size-8 shrink-0 text-[#9aa0a6]" />
          <span className="ml-4 min-w-0 flex-1 truncate leading-9">
            <span className="text-white">localhost</span>
            <span className={theme.path}>:3000/chat/story/newTitle</span>
          </span>
          {translate && <Slot label="Translate"><MdGTranslate className="size-[30px]" /></Slot>}
          <Slot label="Share"><ShareIcon /></Slot>
          <Slot label="Bookmark"><MdStarOutline className="size-9" /></Slot>
        </div>
        <div className={`flex ${theme.ext}`}>
          {extensions}
          <Slot label="Extensions"><MdExtension className="size-[34px]" /></Slot>
          <Slot label="Side panel"><PanelIcon /></Slot>
          <Slot label="Profile">{avatar}</Slot>
          <Slot label="More">
            <svg width="6" height="28" viewBox="0 0 6 28" fill="currentColor"><circle cx="3" cy="4" r="3" /><circle cx="3" cy="14" r="3" /><circle cx="3" cy="24" r="3" /></svg>
          </Slot>
        </div>
      </div>

      <main className="min-h-0 flex-1">
        <JoinForm id={id} name={name} />
      </main>

      <div className="h-[30px] shrink-0 border-t-2 border-[#2c2d2f] bg-[#212121] pt-1.5 pr-[37px] pl-1.5">
        <div className="h-4 rounded-full bg-[#525252]" />
      </div>
      <div className="pointer-events-none absolute inset-0 rounded-[20px] border-2 border-x border-white/25" />
    </section>
  );
}

export default function App() {
  return (
    <div className="h-screen bg-white p-9" style={{ fontFamily: SANS }}>
      <div className="flex h-full flex-col overflow-hidden bg-black shadow-[0_0_40px_rgba(0,0,0,0.45)]">
        <MenuBar />
        <div className="h-0.5 shrink-0 bg-[linear-gradient(to_right,#000_43%,#55564f_46%,#3a3b3c_54%,#000_57%)]" />
        <div className="flex min-h-0 flex-1">
          <BrowserWindow id="dark" theme={DARK} name="Bob" extensions={<Extensions />} avatar={<MaskAvatar />} />
          <BrowserWindow
            id="red"
            theme={RED}
            name="Alice"
            translate
            avatar={
              <span className="flex size-11 items-center justify-center rounded-full bg-[#58090d]">
                <MdPerson className="size-9" />
              </span>
            }
          />
        </div>
        <div className="h-1.5 shrink-0 bg-[linear-gradient(to_right,#000_37%,#33383f_38%,#262b33_45%,#1c2026_52%,#2b3038_60%,#3a3a3a_62%,#000_63%)]" />
        <Dock />
      </div>
    </div>
  );
}
